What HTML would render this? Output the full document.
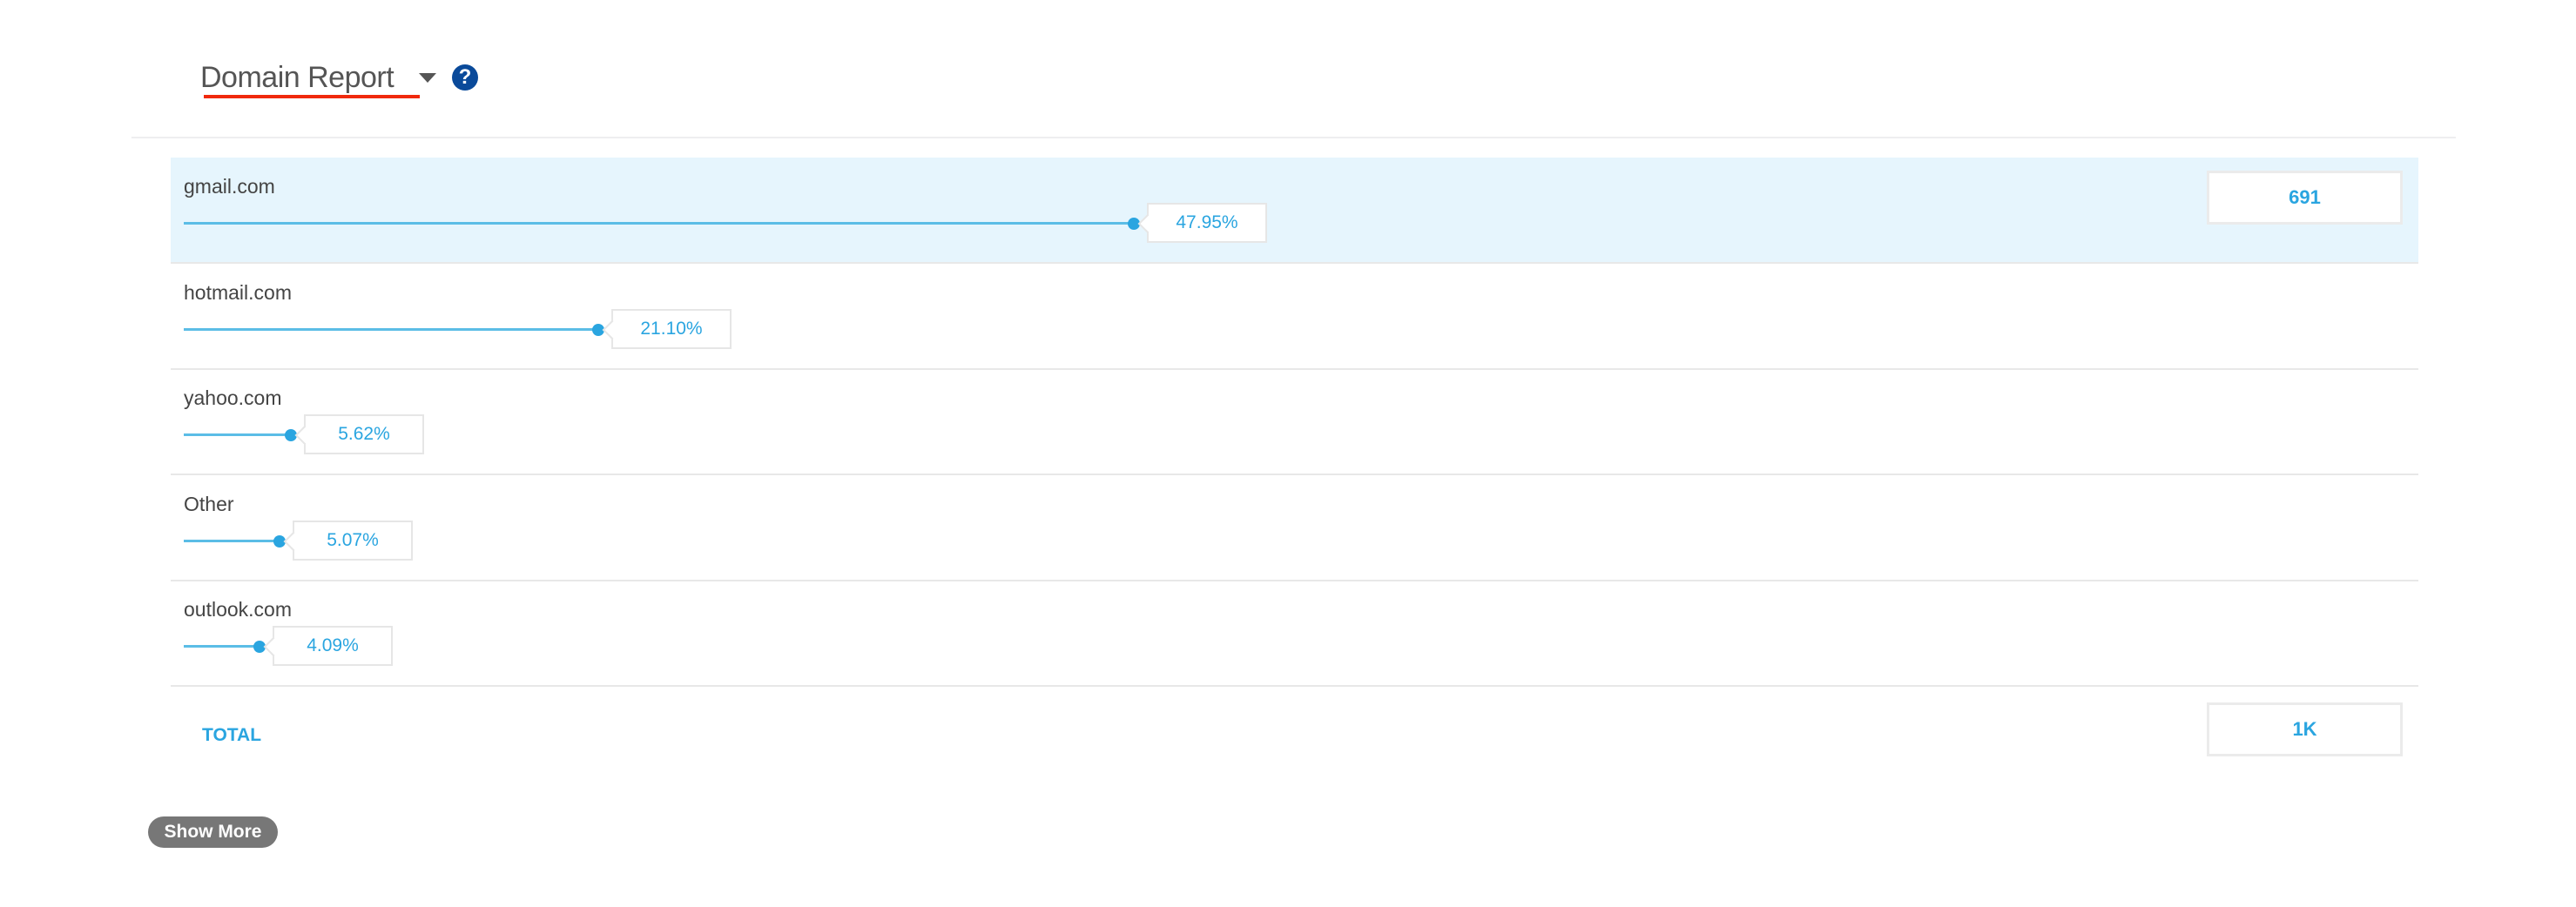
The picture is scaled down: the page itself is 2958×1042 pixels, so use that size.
<!DOCTYPE html>
<html><head><meta charset="utf-8"><style>
*{margin:0;padding:0;box-sizing:border-box}
body{width:2958px;height:1042px;background:#fff;position:relative;overflow:hidden;font-family:"Liberation Sans",sans-serif}
.abs{position:absolute}
.title{left:230px;top:70px;font-size:34px;color:#555;letter-spacing:-0.5px}
.ul{left:234px;top:109px;width:248px;height:4px;background:#f0290c}
.hr{left:151px;top:157px;width:2669px;height:2px;background:#eeeef0}
.row{position:absolute;left:196px;width:2581px;height:122px;border-bottom:2px solid #e8e8e8}
.lbl{position:absolute;left:15px;top:20px;font-size:23px;color:#444}
.line{position:absolute;left:15px;top:74px;height:3px;background:#5bbde6}
.dot{position:absolute;top:69px;width:14px;height:14px;border-radius:50%;background:#2aa5e0}
.val{position:absolute;top:52px;width:138px;height:46px;border:2px solid #e6e6e6;background:#fff;color:#2aa5e0;font-size:21px;text-align:center;line-height:42px}
.val:before{content:"";position:absolute;left:-9px;top:14px;width:14px;height:14px;background:#fff;border-left:2px solid #e6e6e6;border-bottom:2px solid #e6e6e6;transform:rotate(45deg)}
.cnt{position:absolute;left:2534px;width:225px;height:62px;border:3px solid #ebebeb;background:#fff;color:#2aa5e0;font-weight:bold;font-size:22px;text-align:center;line-height:56px}
</style></head><body>
<div class="abs title">Domain Report</div>
<div class="abs" style="left:481px;top:84px;width:0;height:0;border-left:10px solid transparent;border-right:10px solid transparent;border-top:11px solid #555"></div>
<div class="abs" style="left:519px;top:74px;width:30px;height:30px;border-radius:50%;background:#0a4a9a;color:#fff;font-weight:bold;font-size:24px;text-align:center;line-height:30px">?</div>
<div class="abs ul"></div>
<div class="abs hr"></div>

<div class="row" style="top:181px;background:#e6f5fd"><div class="lbl">gmail.com</div><div class="line" style="width:1091px"></div><div class="dot" style="left:1099px"></div><div class="val" style="left:1121px">47.95%</div></div>
<div class="row" style="top:303px"><div class="lbl">hotmail.com</div><div class="line" style="width:476px"></div><div class="dot" style="left:484px"></div><div class="val" style="left:506px">21.10%</div></div>
<div class="row" style="top:424px"><div class="lbl">yahoo.com</div><div class="line" style="width:123px"></div><div class="dot" style="left:131px"></div><div class="val" style="left:153px">5.62%</div></div>
<div class="row" style="top:546px"><div class="lbl">Other</div><div class="line" style="width:110px"></div><div class="dot" style="left:118px"></div><div class="val" style="left:140px">5.07%</div></div>
<div class="row" style="top:667px"><div class="lbl">outlook.com</div><div class="line" style="width:87px"></div><div class="dot" style="left:95px"></div><div class="val" style="left:117px">4.09%</div></div>

<div class="cnt" style="top:196px">691</div>
<div class="abs" style="left:232px;top:833px;color:#2aa5e0;font-weight:bold;font-size:21px">TOTAL</div>
<div class="cnt" style="top:807px">1K</div>
<div class="abs" style="left:170px;top:938px;width:149px;height:36px;border-radius:18px;background:#777;color:#fff;font-weight:bold;font-size:21px;text-align:center;line-height:36px">Show More</div>
</body></html>
